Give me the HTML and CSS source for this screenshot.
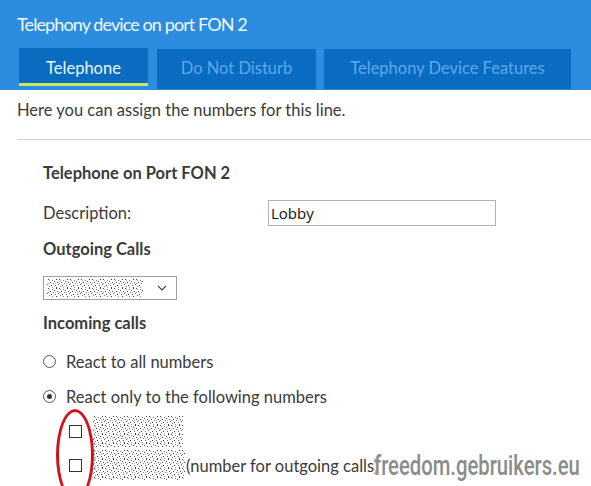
FILE: index.html
```html
<!DOCTYPE html>
<html lang="en">
<head>
    <meta charset="UTF-8">
    <title>Telephony device on port FON 2</title>
    <link rel="stylesheet" href="styles.css">
</head>
<body>

    <!-- Hlavička se záložkami -->
    <div class="header">
        <div class="title">Telephony device on port FON 2</div>
        <div class="tabs">
            <div class="tab tab-active" style="width: 129px">Telephone</div>
            <div class="tab" style="width: 159px">Do Not Disturb</div>
            <div class="tab" style="width: 247px">Telephony Device Features</div>
        </div>
    </div>

    <div class="intro">Here you can assign the numbers for this line.</div>
    <div class="divider"></div>

    <svg width="0" height="0" class="defs">
        <defs>
            <pattern id="noise" width="11" height="9" patternUnits="userSpaceOnUse">
                <rect x="1" y="0" width="1" height="1" fill="#444"/>
                <rect x="5" y="1" width="1" height="1" fill="#777"/>
                <rect x="9" y="0" width="1" height="1" fill="#333"/>
                <rect x="7" y="2" width="1" height="1" fill="#555"/>
                <rect x="3" y="3" width="1" height="1" fill="#444"/>
                <rect x="6" y="4" width="1" height="1" fill="#888"/>
                <rect x="10" y="3" width="1" height="1" fill="#555"/>
                <rect x="0" y="5" width="1" height="1" fill="#666"/>
                <rect x="4" y="6" width="1" height="1" fill="#333"/>
                <rect x="8" y="6" width="1" height="1" fill="#666"/>
                <rect x="2" y="7" width="1" height="1" fill="#777"/>
                <rect x="9" y="8" width="1" height="1" fill="#444"/>
                <rect x="5" y="8" width="1" height="1" fill="#999"/>
                <rect x="2" y="1" width="1" height="1" fill="#aaa"/>
                <rect x="8" y="4" width="1" height="1" fill="#bbb"/>
                <rect x="1" y="4" width="1" height="1" fill="#999"/>
            </pattern>
        </defs>
    </svg>

    <div class="form">
        <div class="row heading">Telephone on Port FON 2</div>

        <div class="row desc-row">
            <span class="label">Description:</span>
            <div class="text-input">Lobby</div>
        </div>

        <div class="row heading small">Outgoing Calls</div>

        <div class="row select-row">
            <div class="select">
                <svg class="noise" width="96" height="18"><rect width="96" height="18" fill="url(#noise)"/></svg>
                <svg class="chevron" width="10" height="6" viewBox="0 0 10 6"><path d="M1 1 L5 5 L9 1" fill="none" stroke="#444" stroke-width="1.1"/></svg>
            </div>
        </div>

        <div class="row heading small">Incoming calls</div>

        <div class="row radio-row first">
            <span class="radio"></span>
            <span>React to all numbers</span>
        </div>
        <div class="row radio-row">
            <span class="radio checked"></span>
            <span>React only to the following numbers</span>
        </div>

        <div class="numbers">
            <div class="row num-row">
                <span class="checkbox"></span>
                <svg class="noise" width="90" height="31"><rect width="90" height="31" fill="url(#noise)"/></svg>
            </div>
            <div class="row num-row">
                <span class="checkbox"></span>
                <svg class="noise" width="92" height="30"><rect width="92" height="30" fill="url(#noise)"/></svg>
                <span class="note">(number for outgoing calls)</span>
            </div>
            <div class="marker"></div>
        </div>
    </div>

    <div class="watermark">freedom.gebruikers.eu</div>

</body>
</html>
```

FILE: styles.css
```css
/* Základ */
body {
    margin: 0;
    font-family: "Lato", "Open Sans", sans-serif;
    font-size: 16.5px;
    color: #3a3a3a;
    background-color: #fff;
    overflow: hidden;
    height: 486px;
    position: relative;
}

.defs {
    position: absolute;
}

/* Hlavička */
.header {
    background-color: #2b8ce0;
    height: 90px;
    padding-left: 19px;
}

.title {
    height: 49px;
    line-height: 48px;
    margin-left: -2px;
    font-size: 18px;
    letter-spacing: -0.9px;
    color: #f2f8ff;
}

.tabs {
    display: flex;
    gap: 8px;
}

.tab {
    height: 40px;
    line-height: 39px;
    text-align: center;
    background-color: #0a6cc1;
    color: #5ea8ea;
    font-size: 16.5px;
}

.tab-active {
    color: #eaf5ff;
    box-shadow: inset 0 -3px 0 #cde55a, 0 -1px 0 #0a6cc1;
    height: 37px;
    margin-right: 1px;
}

/* Úvodní text */
.intro {
    height: 49px;
    line-height: 40px;
    padding-left: 17px;
}

.divider {
    height: 1px;
    margin-left: 17px;
    background-color: #d0d0d0;
}

/* Formulář */
.form {
    padding: 16px 0 0 43px;
}

.row {
    display: flex;
    align-items: center;
}

.heading {
    height: 34px;
    font-weight: bold;
}

.heading.small {
    height: 26px;
}

.desc-row {
    height: 46px;
}

.label {
    width: 225px;
}

.text-input {
    width: 224px;
    height: 24px;
    border: 1px solid #b4b4b4;
    font-family: "Open Sans", sans-serif;
    font-size: 15px;
    line-height: 24px;
    padding-left: 2px;
    color: #111;
    box-sizing: content-box;
}

.select-row {
    box-sizing: border-box;
    height: 48px;
    padding-top: 14px;
    align-items: flex-start;
}

.select {
    height: 22px;
    border: 1px solid #a0a0a0;
    display: flex;
    align-items: center;
    justify-content: space-between;
    padding: 0 9px 0 3px;
    box-sizing: content-box;
    width: 120px;
}

.radio-row {
    height: 35px;
    gap: 10px;
}

.radio-row.first {
    margin-top: 8px;
}

.radio {
    width: 11px;
    height: 11px;
    border: 1px solid #555;
    border-radius: 50%;
    position: relative;
    background: #fff;
}

.radio.checked::after {
    content: "";
    position: absolute;
    left: 3px;
    top: 3px;
    width: 5px;
    height: 5px;
    border-radius: 50%;
    background-color: #333;
}

.numbers {
    position: relative;
    padding-left: 26px;
}

.num-row {
    height: 34px;
    gap: 11px;
}

.checkbox {
    width: 11px;
    height: 11px;
    border: 1px solid #333;
    background: #fff;
}

.note {
    margin-left: -10px;
    margin-top: 2px;
}

/* Zvýraznění červenou elipsou */
.marker {
    position: absolute;
    left: 13px;
    top: -5px;
    width: 32px;
    height: 86px;
    border: 3px solid #d3101c;
    border-radius: 50%;
}

/* Vodoznak */
.watermark {
    position: absolute;
    left: 374px;
    top: 450px;
    font-family: "Roboto", sans-serif;
    font-weight: 500;
    font-size: 27px;
    color: #8c8c8c;
    transform: scaleX(0.75);
    transform-origin: left top;
    text-shadow: 0 0 2px #fff, 0 0 2px #fff;
}
```
